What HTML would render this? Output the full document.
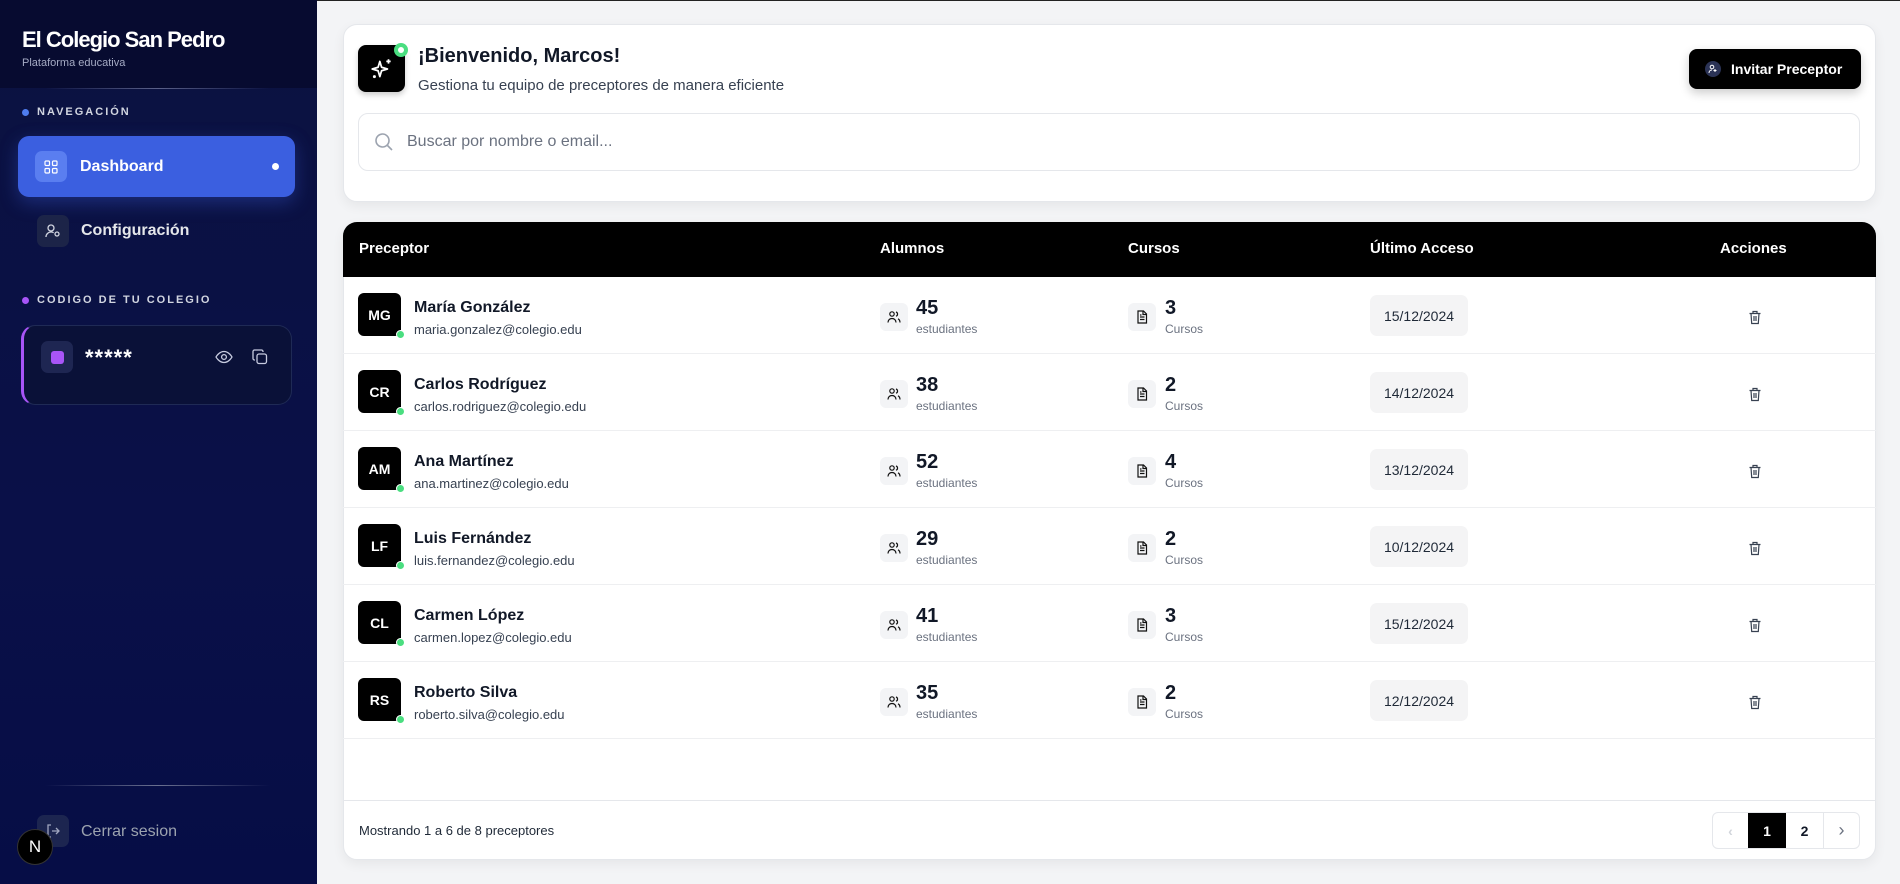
<!DOCTYPE html>
<html><head><meta charset="utf-8"><style>
*{box-sizing:border-box;margin:0;padding:0}
body{width:1900px;height:884px;overflow:hidden;font-family:"Liberation Sans",sans-serif;background:#f3f4f6;position:relative;color:#111827}
.a{position:absolute}
#sb{left:0;top:0;width:317px;height:884px;background:linear-gradient(180deg,#0b1240 0%,#0a1048 60%,#060d46 100%)}
#sb .hd{left:0;top:0;width:317px;height:88px;background:#070b30}
.lbl{font-size:11px;font-weight:bold;letter-spacing:2px;color:#d1d5e0}
.dot{width:7px;height:7px;border-radius:50%}
.ib{border-radius:7px;display:flex;align-items:center;justify-content:center}
.card{background:#fff;border:1px solid #e5e7eb;border-radius:14px;box-shadow:0 4px 12px rgba(0,0,0,.06)}
.row{left:343px;width:1533px;height:77px;border-bottom:1px solid #eeeff1}
.av{left:15px;top:16px;width:43px;height:43px;background:#000;border-radius:6px;color:#fff;font-weight:bold;font-size:14px;display:flex;align-items:center;justify-content:center}
.gd{width:9px;height:9px;border-radius:50%;background:#4ade80;border:1.5px solid #fff;right:-4px;bottom:-3px}
.nm{left:71px;top:22px;font-size:16px;font-weight:bold;color:#111827}
.em{left:71px;top:45px;font-size:13px;color:#374151}
.sq{width:28px;height:28px;background:#f3f4f6;border-radius:6px;display:flex;align-items:center;justify-content:center;top:26px}
.num{top:20px;font-size:20px;font-weight:bold}
.sub{top:45px;font-size:12px;color:#6b7280}
.dt{left:1027px;top:18px;width:98px;height:41px;background:#f4f4f5;border-radius:7px;font-size:14px;color:#1f2937;display:flex;align-items:center;justify-content:center}
.tr{left:1405px;top:33px}
.th{top:240px;font-size:15px;font-weight:bold;color:#fff}
</style></head><body>
<div id="sb" class="a">
 <div class="a hd"></div>
 <div class="a" style="left:22px;top:27px;font-size:22px;font-weight:bold;color:#fff;letter-spacing:-1px">El Colegio San Pedro</div>
 <div class="a" style="left:22px;top:57px;font-size:11px;color:#a5abc4">Plataforma educativa</div>
 <div class="a" style="left:45px;top:88px;width:225px;height:1px;background:linear-gradient(90deg,transparent,#5a6088,transparent)"></div>
 <div class="a dot" style="left:22px;top:109px;background:#4f7df0"></div>
 <div class="a lbl" style="left:37px;top:106px">NAVEGACIÓN</div>
 <div class="a" style="left:18px;top:136px;width:277px;height:61px;background:#3b5fe0;border-radius:11px;box-shadow:0 6px 18px rgba(59,95,224,.35)"></div>
 <div class="a ib" style="left:35px;top:151px;width:32px;height:31px;background:#5a7ef0">
  <svg width="14" height="14" viewBox="0 0 14 14" fill="none" stroke="#fff" stroke-width="1.2"><rect x="1" y="1" width="4.5" height="4.5" rx="1"/><rect x="8.5" y="1" width="4.5" height="4.5" rx="1"/><rect x="1" y="8.5" width="4.5" height="4.5" rx="1"/><rect x="8.5" y="8.5" width="4.5" height="4.5" rx="1"/></svg></div>
 <div class="a" style="left:80px;top:158px;font-size:16px;font-weight:bold;color:#fff">Dashboard</div>
 <div class="a dot" style="left:272px;top:163px;background:#fff"></div>
 <div class="a ib" style="left:37px;top:215px;width:32px;height:32px;background:#1c2448">
  <svg width="16" height="16" viewBox="0 0 16 16" fill="none" stroke="#d1d5e0" stroke-width="1.3"><circle cx="6" cy="5" r="3"/><path d="M1 14c0-3 2.5-5 5-5 1 0 2 .3 2.6.8"/><circle cx="12" cy="11" r="2"/></svg></div>
 <div class="a" style="left:81px;top:222px;font-size:16px;font-weight:bold;color:#e5e7eb">Configuración</div>
 <div class="a dot" style="left:22px;top:297px;background:#a855f7"></div>
 <div class="a lbl" style="left:37px;top:294px">CODIGO DE TU COLEGIO</div>
 <div class="a" style="left:21px;top:325px;width:271px;height:80px;background:#0a1138;border-radius:14px;border:1px solid #1f2a55;border-left:3px solid #a855f7"></div>
 <div class="a ib" style="left:41px;top:341px;width:32px;height:32px;background:#1e2652"><div style="width:13px;height:13px;background:#a855f7;border-radius:3px"></div></div>
 <div class="a" style="left:85px;top:345px;font-size:22px;font-weight:bold;color:#fff;letter-spacing:1px">*****</div>
 <svg class="a" style="left:215px;top:350px" width="18" height="14" viewBox="0 0 18 14" fill="none" stroke="#c7cbe0" stroke-width="1.3"><path d="M1 7s3-5.5 8-5.5S17 7 17 7s-3 5.5-8 5.5S1 7 1 7z"/><circle cx="9" cy="7" r="2.4"/></svg>
 <svg class="a" style="left:252px;top:349px" width="16" height="16" viewBox="0 0 16 16" fill="none" stroke="#c7cbe0" stroke-width="1.3"><rect x="5" y="5" width="9.5" height="9.5" rx="2"/><path d="M3 11H2.5A1.5 1.5 0 011 9.5v-7A1.5 1.5 0 012.5 1h7A1.5 1.5 0 0111 2.5V3"/></svg>
 <div class="a" style="left:45px;top:785px;width:225px;height:1px;background:linear-gradient(90deg,transparent,#6a7090,transparent)"></div>
 <div class="a ib" style="left:37px;top:815px;width:32px;height:32px;background:#1c2550">
  <svg width="16" height="16" viewBox="0 0 16 16" fill="none" stroke="#a0a6bf" stroke-width="1.3"><path d="M6 2H3v12h3M7 8h7M11 5l3 3-3 3"/></svg></div>
 <div class="a" style="left:81px;top:823px;font-size:16px;color:#9ca3af">Cerrar sesion</div>
 <div class="a" style="left:17px;top:829px;width:36px;height:36px;border-radius:50%;background:#000;border:1.5px solid #333;color:#fff;font-size:17px;display:flex;align-items:center;justify-content:center">N</div>
</div>
<div class="a" style="left:317px;top:0;width:1583px;height:1px;background:#222"></div>

<div class="a card" style="left:343px;top:24px;width:1533px;height:178px"></div>
<div class="a" style="left:358px;top:45px;width:47px;height:47px;background:#000;border-radius:8px;box-shadow:0 3px 6px rgba(0,0,0,.2);display:flex;align-items:center;justify-content:center">
 <svg width="26" height="26" viewBox="0 0 24 24" fill="none" stroke="#fff" stroke-width="1.6" stroke-linejoin="round"><path d="M10 5l1.6 5.4L17 12l-5.4 1.6L10 19l-1.6-5.4L3 12l5.4-1.6z"/><path d="M18 3v4M16 5h4"/><circle cx="5" cy="19" r=".6" fill="#fff"/></svg></div>
<div class="a" style="left:394px;top:43px;width:14px;height:14px;border-radius:50%;background:#4ade80;border:3px solid #4ade80"><div style="width:6px;height:6px;margin:1px;border-radius:50%;background:#fff"></div></div>
<div class="a" style="left:418px;top:45px;font-size:20px;font-weight:bold;color:#111827">¡Bienvenido, Marcos!</div>
<div class="a" style="left:418px;top:77px;font-size:15px;color:#374151">Gestiona tu equipo de preceptores de manera eficiente</div>
<div class="a" style="left:1689px;top:49px;width:172px;height:40px;background:#000;border-radius:8px;box-shadow:0 4px 10px rgba(0,0,0,.2)"></div>
<div class="a" style="left:1705px;top:61px;width:16px;height:16px;border-radius:50%;background:#2b3356;display:flex;align-items:center;justify-content:center"><svg width="10" height="10" viewBox="0 0 10 10" fill="none" stroke="#fff" stroke-width="1"><circle cx="4" cy="3" r="1.8"/><path d="M1 9c0-2 1.5-3 3-3M7 5v3M5.5 6.5h3"/></svg></div>
<div class="a" style="left:1731px;top:61px;font-size:14px;font-weight:bold;color:#fff">Invitar Preceptor</div>
<div class="a" style="left:358px;top:113px;width:1502px;height:58px;border:1px solid #e5e7eb;border-radius:10px;background:#fff"></div>
<svg class="a" style="left:374px;top:132px" width="20" height="20" viewBox="0 0 20 20" fill="none" stroke="#9ca3af" stroke-width="1.6"><circle cx="8.5" cy="8.5" r="6.5"/><path d="M13.5 13.5L18 18"/></svg>
<div class="a" style="left:407px;top:133px;font-size:16px;color:#6b7280">Buscar por nombre o email...</div>

<div class="a card" style="left:343px;top:222px;width:1533px;height:638px;overflow:hidden"></div>
<div class="a" style="left:343px;top:222px;width:1533px;height:55px;background:#000;border-radius:14px 14px 0 0"></div>
<div class="a th" style="left:359px">Preceptor</div>
<div class="a th" style="left:880px">Alumnos</div>
<div class="a th" style="left:1128px">Cursos</div>
<div class="a th" style="left:1370px">Último Acceso</div>
<div class="a th" style="left:1720px">Acciones</div>

<div id="rows"></div>
<div class="a" style="left:343px;top:800px;width:1533px;height:1px;background:#e5e7eb"></div>
<div class="a" style="left:359px;top:823px;font-size:13px;color:#1f2937">Mostrando 1 a 6 de 8 preceptores</div>
<div class="a" style="left:1712px;top:812px;width:148px;height:37px;border:1px solid #e5e7eb;border-radius:6px;background:#fff;display:flex;overflow:hidden;font-size:14px;font-weight:bold">
 <div style="width:35px;display:flex;align-items:center;justify-content:center;color:#d1d5db">‹</div>
 <div style="width:38px;background:#000;color:#fff;display:flex;align-items:center;justify-content:center">1</div>
 <div style="width:38px;display:flex;align-items:center;justify-content:center;border-right:1px solid #e5e7eb">2</div>
 <div style="flex:1;display:flex;align-items:center;justify-content:center;color:#6b7280;font-weight:normal;font-size:18px">›</div>
</div>
<script>
var d=[["MG","María González","maria.gonzalez@colegio.edu",45,3,"15/12/2024"],["CR","Carlos Rodríguez","carlos.rodriguez@colegio.edu",38,2,"14/12/2024"],["AM","Ana Martínez","ana.martinez@colegio.edu",52,4,"13/12/2024"],["LF","Luis Fernández","luis.fernandez@colegio.edu",29,2,"10/12/2024"],["CL","Carmen López","carmen.lopez@colegio.edu",41,3,"15/12/2024"],["RS","Roberto Silva","roberto.silva@colegio.edu",35,2,"12/12/2024"]];
var ppl='<svg width="14" height="14" viewBox="0 0 14 14" fill="none" stroke="#111" stroke-width="1.2"><circle cx="5" cy="4" r="2.2"/><path d="M1 12.5c0-2.5 1.8-4 4-4s4 1.5 4 4"/><path d="M9 2a2.2 2.2 0 010 4.2M11 8.8c1.2.6 2 1.9 2 3.7"/></svg>';
var doc='<svg width="14" height="14" viewBox="0 0 14 14" fill="none" stroke="#111" stroke-width="1.2"><path d="M3 1h5.5L11.5 4v9h-8.5z"/><path d="M8 1v3.5h3.5M5 7h4.5M5 9.5h4.5M5 5h1.5"/></svg>';
var tr='<svg width="14" height="15" viewBox="0 0 14 15" fill="none" stroke="#374151" stroke-width="1.2"><path d="M1.5 3.5h11M5 3.5V1.5h4v2M3 3.5l.7 10h6.6l.7-10M6 6v5M8 6v5"/></svg>';
var h='';
d.forEach(function(r,i){var t=277+i*77;
h+='<div class="a row" style="top:'+t+'px"><div class="a av">'+r[0]+'<div class="a gd"></div></div><div class="a nm">'+r[1]+'</div><div class="a em">'+r[2]+'</div>'+
'<div class="a sq" style="left:537px">'+ppl+'</div><div class="a num" style="left:573px">'+r[3]+'</div><div class="a sub" style="left:573px">estudiantes</div>'+
'<div class="a sq" style="left:785px">'+doc+'</div><div class="a num" style="left:822px">'+r[4]+'</div><div class="a sub" style="left:822px">Cursos</div>'+
'<div class="a dt">'+r[5]+'</div><div class="a tr">'+tr+'</div></div>';});
document.getElementById('rows').innerHTML=h;
</script>
</body></html>
